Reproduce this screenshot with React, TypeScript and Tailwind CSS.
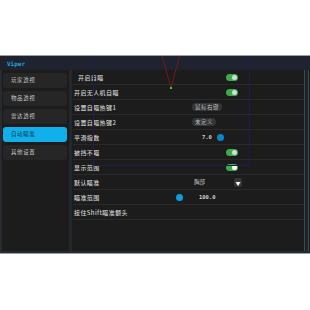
import React from 'react';

const tabs = ['玩家透视', '物品透视', '雷达透视', '自动瞄准', '其他设置'];

function Toggle({ bright }: { bright?: boolean }) {
    return (
        <div className="w-[12px] h-[7px] rounded-full bg-[#3dab4a] flex items-center justify-end pr-[1px]">
            <div className={`w-[5px] h-[5px] rounded-full ${bright ? 'bg-white' : 'bg-[#d8d8d8]'}`} />
        </div>
    );
}

function Pill({ text }: { text: string }) {
    return (
        <div className="h-[8px] px-[3px] rounded-full bg-[#333537] text-[5.5px] leading-[8px] text-[#bdbdbd] tracking-[0.5px]">
            {text}
        </div>
    );
}

function Row({ label, children, indent }: { label: string; children?: React.ReactNode; indent?: boolean }) {
    return (
        <div className="h-[15px] flex items-center border-b border-[#2a2a2a] relative">
            <span className={`text-[6px] text-[#cfcfcf] font-medium tracking-[0.4px] ${indent ? 'pl-[5px]' : 'pl-[1px]'}`}>{label}</span>
            {children}
        </div>
    );
}

export default function App() {
    return (
        <div className="w-[310px] h-[310px] bg-white relative overflow-hidden" style={{ fontFamily: '"Noto Sans CJK SC", "DejaVu Sans", sans-serif' }}>
            <div className="h-[55px]" />
            <div className="h-[199px] flex flex-col border-t border-b border-[#9ba1a8] bg-[#1c1c1c]">
                <div className="h-[14px] bg-[#1f2330] flex items-center pl-[7px]">
                    <span className="text-[6px] font-bold text-[#1ba4dc]" style={{ fontFamily: '"DejaVu Sans Mono", monospace' }}>Viper</span>
                </div>
                <div className="flex-1 flex border-l-2 border-b-2 border-[#272b30]">
                    <div className="w-[70px] pt-[3px] pl-[1px] pr-[2px] flex flex-col gap-[3px] border-r-[3px] border-[#24282c]">
                        {tabs.map((t, i) => (
                            <div
                                key={t}
                                className={`h-[15px] rounded-[3px] flex items-center pl-[8px] text-[5.5px] tracking-[0.6px] ${i === 3 ? 'bg-[#0fb0ec] text-[#143446]' : 'bg-[#262626] text-[#c4c4c4]'}`}
                            >
                                {t}
                            </div>
                        ))}
                    </div>
                    <div className="flex-1 flex flex-col pl-[1px]">
                        <Row label="开启自瞄" indent>
                            <div className="absolute left-[153px]"><Toggle /></div>
                        </Row>
                        <Row label="开启无人机自瞄">
                            <div className="absolute left-[153px]"><Toggle /></div>
                        </Row>
                        <Row label="设置自瞄热键1">
                            <div className="absolute left-[119px]"><Pill text="鼠标右键" /></div>
                        </Row>
                        <Row label="设置自瞄热键2">
                            <div className="absolute left-[119px]"><Pill text="未定义" /></div>
                        </Row>
                        <Row label="平滑指数">
                            <div className="absolute left-[129px] flex items-center gap-[5px]">
                                <span className="text-[5.5px] font-bold text-[#cfcfcf]" style={{ fontFamily: '"DejaVu Sans Mono", monospace' }}>7.0</span>
                                <div className="w-[7px] h-[7px] rounded-full bg-[#0a86c9]" />
                            </div>
                        </Row>
                        <Row label="被挡不瞄">
                            <div className="absolute left-[153px]"><Toggle /></div>
                        </Row>
                        <Row label="显示范围">
                            <div className="absolute left-[153px]"><Toggle bright /></div>
                        </Row>
                        <Row label="默认瞄准">
                            <span className="absolute left-[121px] text-[5.5px] text-[#c4c4c4]">胸部</span>
                            <div className="absolute left-[161px] w-[8px] h-[9px] rounded-[2px] bg-[#333537] flex items-center justify-center text-[5px] text-white leading-none">▼</div>
                        </Row>
                        <Row label="瞄准范围">
                            <div className="absolute left-[103px] w-[7px] h-[7px] rounded-full bg-[#0a9ee0]" />
                            <span className="absolute left-[126px] text-[5.5px] font-bold text-[#cfcfcf]" style={{ fontFamily: '"DejaVu Sans Mono", monospace' }}>100.0</span>
                        </Row>
                        <Row label="按住Shift瞄准额头" />
                    </div>
                    <div className="w-[5px] border-x border-[#3a4651] bg-[#1f2326] mr-[1px]" />
                </div>
            </div>
            <svg className="absolute inset-0 pointer-events-none" width="310" height="310">
                <path d="M93.5 56 V165.5 H249.5 V56" fill="none" stroke="#1f1c55" strokeWidth="1" />
                <path d="M162 56 L171 87.5 L179.5 56" fill="none" stroke="#7a1717" strokeWidth="0.9" />
                <rect x="170" y="87" width="2" height="2" fill="#16e016" />
            </svg>
        </div>
    );
}
